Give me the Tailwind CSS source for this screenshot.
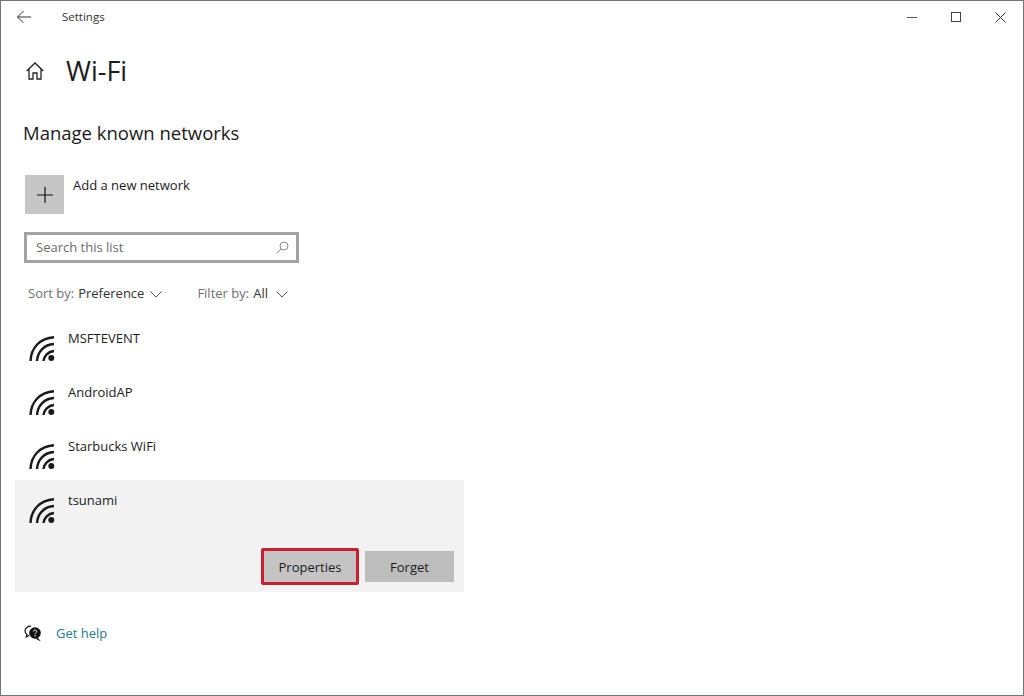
<!DOCTYPE html>
<html lang="en">
  <head>
    <meta charset="UTF-8" />
    <meta name="viewport" content="width=device-width, initial-scale=1.0" />
    <script src="https://cdn.jsdelivr.net/npm/@tailwindcss/browser@4"></script>
    <title>Settings</title>
  </head>
  <body class="bg-white">
    <main class="w-[1024px] h-[696px] overflow-hidden border border-[#6f7573] bg-white font-['Open_Sans',sans-serif] text-[#1c1c1c] flex flex-col">
      <!-- title bar -->
      <div class="h-[32px] shrink-0 flex items-center">
        <svg class="ml-[16px] w-[14px] h-[14px]" viewBox="0 0 14 14" fill="none" stroke="#333" stroke-width="1"><path d="M0.5 7H14M6.5 1L0.5 7l6 6" /></svg>
        <span class="ml-[31px] text-[11.5px] text-[#333]">Settings</span>
        <div class="ml-auto flex items-center">
          <div class="w-[44px] flex justify-center"><div class="w-[10px] h-px bg-[#555]"></div></div>
          <div class="w-[44px] flex justify-center"><div class="w-[10px] h-[10px] border border-[#444]"></div></div>
          <div class="w-[44px] mr-[1px] flex justify-center">
            <svg class="w-[11px] h-[11px]" viewBox="0 0 11 11" fill="none" stroke="#333" stroke-width="1"><path d="M0.5 0.5l10 10M10.5 0.5l-10 10" /></svg>
          </div>
        </div>
      </div>

      <div class="h-[40px] mt-[17px] shrink-0 flex items-center">
        <svg class="ml-[25px] mt-[2px] w-[18px] h-[18px]" viewBox="0 0 18 18" fill="none" stroke="#222" stroke-width="1.3"><path d="M0.7 9L9 1l8.3 8M3 7v10h4v-6h4v6h4V7" /></svg>
        <span class="ml-[22px] text-[27px] leading-none">Wi-Fi</span>
      </div>

      <h2 class="ml-[22px] mt-[28px] text-[18.5px] leading-[30px] text-[#1a1a1a]">Manage known networks</h2>

      <div class="ml-[24px] mt-[27px] flex items-start">
        <div class="w-[39px] h-[39px] bg-[#c6c6c6] flex items-center justify-center">
          <svg class="w-[16px] h-[16px]" viewBox="0 0 16 16" stroke="#111" stroke-width="1.2"><path d="M8 0v16M0 8h16" /></svg>
        </div>
        <span class="ml-[9px] text-[13px] leading-[20px]">Add a new network</span>
      </div>

      <div class="ml-[23px] mt-[18px] w-[275px] h-[31px] border-[3px] border-[#a3a3a3] flex items-center pl-[9px] pr-[7px]">
        <span class="text-[13px] text-[#6c6c6c]">Search this list</span>
        <svg class="ml-auto w-[13px] h-[13px]" viewBox="0 0 13 13" fill="none" stroke="#8a8a8a" stroke-width="1"><circle cx="8" cy="5" r="4" /><path d="M5 8l-4.500 4.500" /></svg>
      </div>

      <div class="ml-[27px] mt-[20px] h-[22px] flex items-center text-[13px]">
        <span class="text-[#707070]">Sort by:</span>
        <span class="ml-[4px] text-[#333]">Preference</span>
        <svg class="ml-[6px] w-[12px] h-[7px]" viewBox="0 0 12 7" fill="none" stroke="#555" stroke-width="1"><path d="M0.500 0.500L6 6l5.500-5.500" /></svg>
        <span class="ml-[35px] text-[#707070]">Filter by:</span>
        <span class="ml-[4px] text-[#333]">All</span>
        <svg class="ml-[8px] w-[12px] h-[7px]" viewBox="0 0 12 7" fill="none" stroke="#555" stroke-width="1"><path d="M0.500 0.500L6 6l5.500-5.500" /></svg>
      </div>

      <!-- network list -->
      <div class="mt-[13px] flex flex-col">
        <div class="h-[54px] ml-[14px] w-[449px] pl-[14px] pt-[14px] flex items-start">
          <svg class="w-[27px] h-[26px] mt-[4px]" viewBox="0 0 27 26" fill="none" stroke="#1a1a1a" stroke-width="2.400"><path d="M1.500 25C2 12 11 2 25 1.200M8 25c.5-9 7-16.500 17-17M14.500 25c.5-5 4.500-9.500 10.500-10" /><circle cx="22.300" cy="22" r="3" fill="#1a1a1a" stroke="none" /></svg>
          <span class="ml-[12px] text-[13px] leading-[18px] -mt-[3px]">MSFTEVENT</span>
        </div>
        <div class="h-[54px] ml-[14px] w-[449px] pl-[14px] pt-[14px] flex items-start">
          <svg class="w-[27px] h-[26px] mt-[4px]" viewBox="0 0 27 26" fill="none" stroke="#1a1a1a" stroke-width="2.400"><path d="M1.500 25C2 12 11 2 25 1.200M8 25c.5-9 7-16.500 17-17M14.500 25c.5-5 4.500-9.500 10.500-10" /><circle cx="22.300" cy="22" r="3" fill="#1a1a1a" stroke="none" /></svg>
          <span class="ml-[12px] text-[13px] leading-[18px] -mt-[3px]">AndroidAP</span>
        </div>
        <div class="h-[54px] ml-[14px] w-[449px] pl-[14px] pt-[14px] flex items-start">
          <svg class="w-[27px] h-[26px] mt-[4px]" viewBox="0 0 27 26" fill="none" stroke="#1a1a1a" stroke-width="2.400"><path d="M1.500 25C2 12 11 2 25 1.200M8 25c.5-9 7-16.500 17-17M14.500 25c.5-5 4.500-9.500 10.500-10" /><circle cx="22.300" cy="22" r="3" fill="#1a1a1a" stroke="none" /></svg>
          <span class="ml-[12px] text-[13px] leading-[18px] -mt-[3px]">Starbucks WiFi</span>
        </div>
        <div class="h-[112px] ml-[14px] w-[449px] pl-[14px] pt-[14px] bg-[#f2f2f2] flex flex-col">
          <div class="h-[30px] flex items-start">
            <svg class="w-[27px] h-[26px] mt-[4px]" viewBox="0 0 27 26" fill="none" stroke="#1a1a1a" stroke-width="2.400"><path d="M1.500 25C2 12 11 2 25 1.200M8 25c.5-9 7-16.500 17-17M14.500 25c.5-5 4.500-9.500 10.500-10" /><circle cx="22.300" cy="22" r="3" fill="#1a1a1a" stroke="none" /></svg>
            <span class="ml-[12px] text-[13px] leading-[18px] -mt-[3px]">tsunami</span>
          </div>
          <div class="mt-[24px] flex items-center justify-end pr-[10px]">
            <button class="w-[98px] h-[37px] pt-[2px] border-[3px] border-[#c9202f] rounded-[2px] bg-[#c4c4c4] text-[13px] text-[#1c1c1c]">Properties</button>
            <button class="ml-[6px] w-[89px] h-[31px] pt-[2px] bg-[#bdbdbd] text-[13px] text-[#1c1c1c]">Forget</button>
          </div>
        </div>
      </div>

      <div class="ml-[23px] mt-[32px] flex items-center">
        <svg class="w-[18px] h-[18px]" viewBox="0 0 18 18">
          <path d="M7 1.200C3.500 1.200 1 3.200 1 6c0 1.500.8 2.700 2 3.500L2.200 12l3-1.700" fill="#fff" stroke="#111" stroke-width="1.200" />
          <circle cx="11" cy="8" r="5.800" fill="#111" />
          <path d="M13.500 12.500l3.500 4-5-2.500z" fill="#111" />
          <path d="M9.500 6.500c0-2 3.200-2 3.200 0 0 1.200-1.600 1.200-1.600 2.600" fill="none" stroke="#fff" stroke-width="1" />
          <circle cx="11.100" cy="10.800" r=".7" fill="#fff" />
        </svg>
        <span class="ml-[14px] text-[13px] text-[#2b7a94]">Get help</span>
      </div>
    </main>
  </body>
</html>
